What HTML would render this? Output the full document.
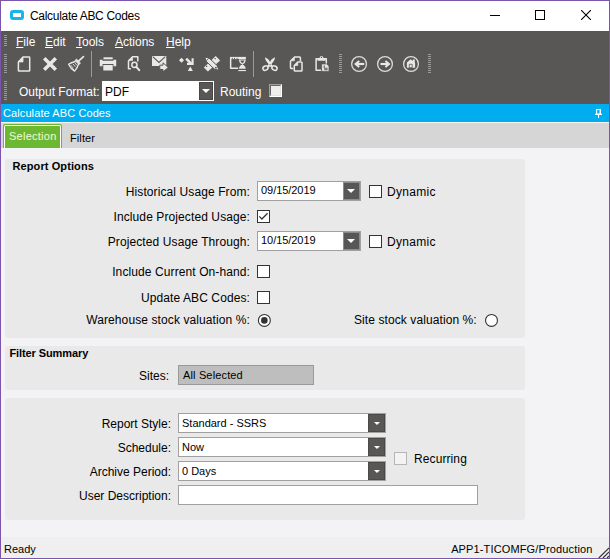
<!DOCTYPE html>
<html><head><meta charset="utf-8">
<style>
html,body{margin:0;padding:0;}
body{width:610px;height:559px;position:relative;overflow:hidden;background:#f3f3f5;font-family:"Liberation Sans",sans-serif;font-size:12px;color:#000;}
div,span{box-sizing:border-box;}
.a{position:absolute;}
.t{position:absolute;white-space:nowrap;line-height:14px;font-size:12px;}
.r{text-align:right;}
.w{color:#fff;}
u{text-decoration:underline;text-decoration-thickness:1px;text-underline-offset:1px;}
.grp{position:absolute;left:5px;width:520px;background:#e9e9e9;border-radius:3px;}
.cb{position:absolute;width:13px;height:13px;border:1px solid #333;background:#fff;}
.box{position:absolute;height:20px;border:1px solid #a0a0a0;background:#fff;}
.dd{position:absolute;top:0;right:0;width:17px;bottom:0;background:#585756;border:1px solid #8c8c8c;}
.dd:after{content:"";position:absolute;left:3px;top:6px;border-left:4px solid transparent;border-right:4px solid transparent;border-top:4px solid #fff;}
.dd2{width:14px;border-color:#474747;}
.dd2:after{left:2px;}
.dd3{border-color:#4a4a4a;}
.dd3:after{left:4.5px;top:7px;border-left-width:3.5px;border-right-width:3.5px;border-top-width:3.5px;}
.grip{position:absolute;left:4px;width:3px;background:repeating-linear-gradient(to bottom,#9a9a9a 0,#9a9a9a 1px,transparent 1px,transparent 2px);}
</style></head><body>
<!-- window border -->
<div class="a" style="left:0;top:0;width:610px;height:559px;border:1px solid #7b54ab;z-index:50;pointer-events:none"></div>
<!-- title bar -->
<div class="a" style="left:0;top:0;width:610px;height:31px;background:#fff"></div>
<div class="a" style="left:10px;top:10px;width:14px;height:10px;border:3px solid #1ab4e8;border-radius:3px;background:#fff"></div>
<div class="t" style="left:30px;top:9px;letter-spacing:-0.3px;color:#000">Calculate ABC Codes</div>
<div class="a" style="left:490px;top:15px;width:10px;height:1px;background:#000"></div>
<div class="a" style="left:535px;top:10px;width:10px;height:10px;border:1px solid #000"></div>
<svg class="a" style="left:581px;top:10px" width="10" height="10" viewBox="0 0 10 10"><path d="M0 0L10 10M10 0L0 10" stroke="#000" stroke-width="1.1"/></svg>

<!-- dark toolbar area -->
<div class="a" style="left:0;top:31px;width:610px;height:73px;background:#585756"></div>
<div class="grip" style="top:35px;height:11px"></div>
<div class="grip" style="top:54px;height:19px"></div>
<div class="grip" style="top:81px;height:19px"></div>
<div class="t w" style="left:16px;top:35px"><u>F</u>ile</div>
<div class="t w" style="left:45px;top:35px"><u>E</u>dit</div>
<div class="t w" style="left:76px;top:35px"><u>T</u>ools</div>
<div class="t w" style="left:115px;top:35px"><u>A</u>ctions</div>
<div class="t w" style="left:166px;top:35px"><u>H</u>elp</div>

<svg class="a" style="left:0;top:0" width="610" height="104" viewBox="0 0 610 104">
<g fill="none" stroke="#e8e8e8" stroke-width="1.5" stroke-linejoin="round">
<!-- new doc -->
<path d="M18.4 62L23 57H29Q29.7 57 29.7 57.7V70.4Q29.7 71.1 29 71.1H19.1Q18.4 71.1 18.4 70.4Z"/><path d="M18.6 61.9L23 57.3V61.9Z" fill="#e8e8e8" stroke-width="0.8"/>
<!-- broom -->
<path d="M83.5 56.7L78.8 60.8" stroke-width="1.7" stroke-linecap="round"/>
<path d="M75.5 61.5Q71 62.5 68.6 64.3Q70.5 68.8 74.6 71.2Q77.6 67.5 78.6 64" stroke-width="1.3"/>
<path d="M75 60.5L76.6 59.2L80.4 62.9L79 64.5Z" fill="#e8e8e8" stroke-width="1"/>
<path d="M70.5 65L73 67.8M71.8 67.5L74 70M73 64L75.5 66.8M75 63L77 65.5" stroke-width="0.9"/>
<!-- preview doc -->
<path d="M128.5 60.8L132.6 56.7H137.8V61.5M130.8 68.8H128.5V60.8"/>
<path d="M128.7 60.6L132.5 57V60.6Z" fill="#e8e8e8" stroke-width="0.7"/>
<circle cx="134.4" cy="64.8" r="2.6" stroke-width="1.5"/>
<path d="M136.3 66.8L139.2 70.2" stroke-width="2" stroke-linecap="round"/>
<!-- window hourglass -->
<path d="M238.2 68.15H230.65V58"/>
<!-- copy -->
<path d="M290.5 61L294.6 57H299.6Q300.4 57 300.4 57.8V61M293.4 68.5H291.3Q290.5 68.5 290.5 67.7V61"/>
<path d="M290.8 60.8L294.4 57.3V60.8Z" fill="#e8e8e8" stroke-width="0.7"/>
<path d="M294.3 65.6L298 61.9H301.2Q302 61.9 302 62.7V70.2Q302 71 301.2 71H295.1Q294.3 71 294.3 70.2Z"/>
<path d="M294.6 65.4L297.8 62.2V65.4Z" fill="#e8e8e8" stroke-width="0.7"/>
<!-- paste clipboard -->
<path d="M321.5 70.2H316.1V58.7H318M324.6 58.7H326.3V64.3"/>
<!-- scissors rings -->
<ellipse cx="265.5" cy="68.1" rx="2.7" ry="2.1" stroke-width="1.5" transform="rotate(-28 265.5 68.1)"/>
<ellipse cx="274.5" cy="68.1" rx="2.7" ry="2.1" stroke-width="1.5" transform="rotate(28 274.5 68.1)"/>
<!-- nav circles -->
<circle cx="359.05" cy="64" r="7.4" stroke-width="1.3" stroke="#dcdcdc"/>
<circle cx="385" cy="64" r="7.4" stroke-width="1.3" stroke="#dcdcdc"/>
<circle cx="411" cy="64" r="7.4" stroke-width="1.3" stroke="#dcdcdc"/>
<path d="M355.5 64H364.2" stroke-width="2.2"/><path d="M359.2 60.9L355.6 64L359.2 67.1" stroke-width="2" stroke-linejoin="miter"/>
<path d="M380.5 64H389.1" stroke-width="2.2"/><path d="M385.4 60.9L389 64L385.4 67.1" stroke-width="2" stroke-linejoin="miter"/>
</g>
<g fill="#e8e8e8">
<!-- X -->
<path d="M44.2 58.25L55.8 69.75M55.8 58.25L44.2 69.75" stroke="#e8e8e8" stroke-width="3.5"/>
<!-- printer -->
<rect x="103.5" y="57.3" width="9.2" height="2"/>
<path d="M99.8 59.8H102.5V60.8H113.5V59.8H116.2V66.3H113.5V64H102.5V66.3H99.8Z"/>
<rect x="103.3" y="65" width="9.4" height="5.5"/>
<!-- mail -->
<path d="M152 56H166.3V66H152Z"/>
<path d="M152.7 56.6L159 62.4L165.3 56.6" fill="none" stroke="#585756" stroke-width="1.1"/>
<path d="M159.8 65.2H163V62.8L168.3 67.4L163 71.9V69.5H159.8Z" stroke="#585756" stroke-width="1"/>
<!-- move -->
<path d="M181.5 57.8L184 60.3L181.5 62.8L179 60.3Z"/>
<path d="M186.2 58.7L191.2 63.7" stroke="#e8e8e8" stroke-width="2.6"/><path d="M187 63.9H192.6V58.3" fill="none" stroke="#e8e8e8" stroke-width="2.1"/>
<path d="M190.3 66.5L192.9 70.9H187.8Z"/>
<!-- pencil ruler -->
<path d="M203.9 67.6L215.7 56.1L220.1 60.5L207.9 71.5Z"/>
<rect x="206" y="65.8" width="1.2" height="1.2" fill="#585756"/><rect x="214.6" y="58" width="1.2" height="1.2" fill="#585756"/>
<path d="M204.9 57.1L209 57.9L217.3 65.8L218.9 70.3L214.3 69L205.9 61.1Z" stroke="#585756" stroke-width="1"/>
<path d="M208.9 58.2L205.9 61.2" stroke="#585756" stroke-width="0.9"/>
<circle cx="215.9" cy="67.7" r="0.9" fill="#585756"/>
<!-- hourglass -->
<rect x="230" y="56.9" width="15.9" height="2.2"/>
<rect x="231.8" y="57.9" width="1" height="1" fill="#585756"/><rect x="234" y="57.9" width="1" height="1" fill="#585756"/><rect x="236.6" y="57.9" width="1" height="1" fill="#585756"/>
<path d="M239 59.5H245.7V60.5Q245.7 62.7 242.8 64.2L242.4 64.4Q245.7 65.5 245.7 68.8H239Q239 65.5 242.2 64.4L241.9 64.2Q239 62.7 239 60.5Z"/>
<path d="M240.3 60.6H244.4Q244 62.4 242.35 63.2Q240.7 62.4 240.3 60.6Z" fill="#585756"/>
<rect x="238.3" y="70" width="7.6" height="1.1"/>
<!-- scissors blades -->
<path d="M265 57.3Q267.6 58.4 268.5 59.6L272.8 66.2L271 67.4L266.2 61Q265 59.4 265 57.3Z"/>
<path d="M275 57.3Q272.4 58.4 271.5 59.6L267.2 66.2L269 67.4L273.8 61Q275 59.4 275 57.3Z"/>
<circle cx="270" cy="64.6" r="0.55" fill="#585756"/>
<!-- paste clip -->
<path d="M319.6 57.8Q320 55.9 321.5 55.9Q323 55.9 323.4 57.8L325.6 58.6V60.7H317.4V58.6Z"/>
<circle cx="321.5" cy="57.4" r="0.7" fill="#585756"/>
<path d="M321.6 63.9H326.7L329 66.2V71.4H321.6Z" stroke="#585756" stroke-width="0.8"/>
<path d="M324.2 65.3V68.2H327.6M324.2 69.7H327.6" fill="none" stroke="#585756" stroke-width="1"/>
<!-- house -->
<path d="M406.9 62.5L410.7 59.3L412.8 61.1V59.5H414.8V62.8L415.1 63V67.8H406.9Z"/><path d="M409.3 67.8V64.3H412.2V67.8Z" fill="none" stroke="#585756" stroke-width="0.8"/>
</g>
<!-- separators -->
<rect x="91" y="51" width="1" height="26" fill="#9a9a9a"/>
<rect x="253" y="51" width="1" height="26" fill="#9a9a9a"/>
</svg>
<div class="grip" style="left:339px;top:54px;height:19px"></div>
<div class="grip" style="left:428px;top:54px;height:19px"></div>
<!-- output format row -->
<div class="t w" style="left:19px;top:85px">Output Format:</div>
<div class="box" style="left:102px;top:81px;width:112px;border-color:#fff"><div class="dd dd2"></div></div>
<div class="t" style="left:105px;top:85px">PDF</div>
<div class="t w" style="left:220px;top:85px">Routing</div>
<div class="a" style="left:269px;top:84px;width:13px;height:13px;border:1px solid;border-color:#a0a0a0 #fff #fff #a0a0a0;background:#e3e3e3"><div class="a" style="left:0;top:0;width:11px;height:11px;border:1px solid;border-color:#6a6a6a #e3e3e3 #e3e3e3 #6a6a6a;background:#eeeeee"></div></div>

<!-- blue header -->
<div class="a" style="left:0;top:104px;width:610px;height:18px;background:#00adef"></div>
<div class="a" style="left:0;top:122px;width:610px;height:1px;background:#f7f3f0"></div>
<svg class="a" style="left:590px;top:104px" width="18" height="18" viewBox="590 104 18 18"><path d="M596 109H601V114H596Z" fill="#fff"/><path d="M597.2 110H599.5V113.6H597.2Z" fill="#00adef"/><rect x="595" y="113.8" width="7" height="1.2" fill="#fff"/><rect x="598" y="115" width="1.1" height="3" fill="#fff"/></svg>
<div class="t w" style="left:3px;top:106px;font-size:11px;letter-spacing:0.1px">Calculate ABC Codes</div>
<!-- tab strip -->
<div class="a" style="left:0;top:123px;width:610px;height:25px;background:#d6d6d6"></div>
<div class="a" style="left:3px;top:124px;width:59px;height:24px;background:#6cb832;border-radius:2px 2px 0 0"></div>
<div class="a" style="left:4px;top:125px;width:57px;height:23px;background:#6cb832;border:1px solid #fff;border-bottom:none;border-radius:2px 2px 0 0"></div>
<div class="t" style="left:9px;top:129px;color:#eefcd8;font-size:11px;letter-spacing:0.25px">Selection</div>
<div class="t" style="left:70px;top:131px;font-size:11px;letter-spacing:0.1px">Filter</div>

<!-- group 1 -->
<div class="grp" style="top:159px;height:179px"></div>
<div class="t" style="left:12.5px;top:159px;font-weight:bold;font-size:11px;letter-spacing:0.1px">Report Options</div>
<div class="t r" style="right:360px;letter-spacing:0.1px;top:185px">Historical Usage From:</div>
<div class="box" style="left:257px;top:181px;width:104px"><div class="dd"></div></div>
<div class="t" style="left:261px;top:183px;font-size:11px;letter-spacing:-0.05px">09/15/2019</div>
<div class="cb" style="left:369px;top:185px"></div>
<div class="t" style="left:387px;top:185px;letter-spacing:0.3px">Dynamic</div>

<div class="t r" style="right:360px;letter-spacing:0.1px;top:210px">Include Projected Usage:</div>
<div class="cb" style="left:257px;top:210px"></div>
<svg class="a" style="left:250px;top:205px" width="25" height="25" viewBox="250 205 25 25"><path d="M259.3 216.4L261.9 219L267.6 213.3" fill="none" stroke="#333" stroke-width="1.3"/></svg>

<div class="t r" style="right:360px;letter-spacing:0.1px;top:235px">Projected Usage Through:</div>
<div class="box" style="left:257px;top:231px;width:104px"><div class="dd"></div></div>
<div class="t" style="left:261px;top:233px;font-size:11px;letter-spacing:-0.05px">10/15/2019</div>
<div class="cb" style="left:369px;top:235px"></div>
<div class="t" style="left:387px;top:235px;letter-spacing:0.3px">Dynamic</div>

<div class="t r" style="right:360px;letter-spacing:0.1px;top:265px">Include Current On-hand:</div>
<div class="cb" style="left:257px;top:265px"></div>
<div class="t r" style="right:360px;letter-spacing:0.1px;top:291px">Update ABC Codes:</div>
<div class="cb" style="left:257px;top:291px"></div>
<div class="t r" style="right:360px;letter-spacing:0.1px;top:313px">Warehouse stock valuation %:</div>
<div class="t" style="left:354px;top:313px;letter-spacing:0.09px">Site stock valuation %:</div>
<svg class="a" style="left:250px;top:305px" width="260" height="25" viewBox="250 305 260 25">
<circle cx="264.35" cy="320.4" r="5.95" fill="#fff" stroke="#333" stroke-width="1.1"/>
<circle cx="264.35" cy="320.4" r="3.3" fill="#333"/>
<circle cx="491.5" cy="320.4" r="5.95" fill="#fff" stroke="#333" stroke-width="1.1"/>
</svg>

<!-- group 2 -->
<div class="grp" style="top:346px;height:44px"></div>
<div class="t" style="left:9.5px;top:346px;font-weight:bold;font-size:11px;letter-spacing:-0.1px">Filter Summary</div>
<div class="t r" style="right:441px;top:369px">Sites:</div>
<div class="box" style="left:178px;top:365px;width:136px;background:#bebebe;border-color:#999"></div>
<div class="t" style="left:183px;top:368px;font-size:11px;letter-spacing:0.15px">All Selected</div>

<!-- group 3 -->
<div class="grp" style="top:398px;height:122px"></div>
<div class="t r" style="right:439px;top:417px">Report Style:</div>
<div class="t r" style="right:439px;top:441px">Schedule:</div>
<div class="t r" style="right:439px;top:465px">Archive Period:</div>
<div class="t r" style="right:439px;top:489px">User Description:</div>
<div class="box" style="left:178px;top:413px;width:208px"><div class="dd dd3"></div></div>
<div class="box" style="left:178px;top:437px;width:208px"><div class="dd dd3"></div></div>
<div class="box" style="left:178px;top:461px;width:208px"><div class="dd dd3"></div></div>
<div class="box" style="left:178px;top:485px;width:300px"></div>
<div class="t" style="left:182px;top:416px;font-size:11px">Standard - SSRS</div>
<div class="t" style="left:182px;top:440px;font-size:11px">Now</div>
<div class="t" style="left:182px;top:464px;font-size:11px">0 Days</div>
<div class="a" style="left:394px;top:452px;width:13px;height:13px;border:1px solid #b6b6b6;background:#f3f3f3"></div>
<div class="t" style="left:414px;top:452px;letter-spacing:0.1px">Recurring</div>

<!-- status bar -->
<div class="a" style="left:0;top:537px;width:610px;height:22px;background:#efefef"></div>
<div class="t" style="left:4px;top:542px;font-size:11px">Ready</div>
<svg class="a" style="left:596px;top:545px" width="13" height="13" viewBox="596 545 13 13">
<path d="M597.8 558L609 546.8M601.9 558L609 550.9M606 558L609 555" stroke="#fff" stroke-width="1"/>
<path d="M598.8 558L609 547.8M602.9 558L609 551.9M607 558L609 556" stroke="#333" stroke-width="1.2"/>
</svg>
<div class="t r" style="right:17.5px;top:542px;font-size:11px;letter-spacing:0.14px">APP1-TICOMFG/Production</div>
</body></html>
